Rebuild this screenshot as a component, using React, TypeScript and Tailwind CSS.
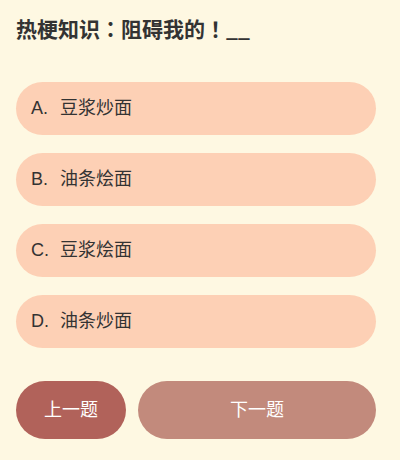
const options = [
  { key: 'A', text: '豆浆炒面' },
  { key: 'B', text: '油条烩面' },
  { key: 'C', text: '豆浆烩面' },
  { key: 'D', text: '油条炒面' },
];

export default function App() {
  return (
    <div className="w-[400px] h-[460px] bg-[#fef8e2] pl-4 pr-6 pt-[14px] font-['Liberation_Sans','Noto_Sans_CJK_SC',sans-serif]">
      <h1 className="text-[21px] leading-7 font-bold text-[#333] font-['Noto_Sans_CJK_TC',sans-serif]">热梗知识：阻碍我的！__</h1>

      <div className="mt-[40px] flex flex-col gap-[18px]">
        {options.map((o) => (
          <div
            key={o.key}
            className="h-[53px] rounded-full bg-[#fdd0b5] flex items-center pl-[15px] text-[18px] text-[#333]"
          >
            <span className="w-[29px]">{o.key}.</span>
            <span>{o.text}</span>
          </div>
        ))}
      </div>

      <div className="mt-[33px] flex gap-3">
        <button className="w-[110px] h-[58px] rounded-full bg-[#b1625a] text-white text-[18px]">上一题</button>
        <button className="flex-1 h-[58px] rounded-full bg-[#c28a7c] text-white text-[18px]">下一题</button>
      </div>
    </div>
  );
}
